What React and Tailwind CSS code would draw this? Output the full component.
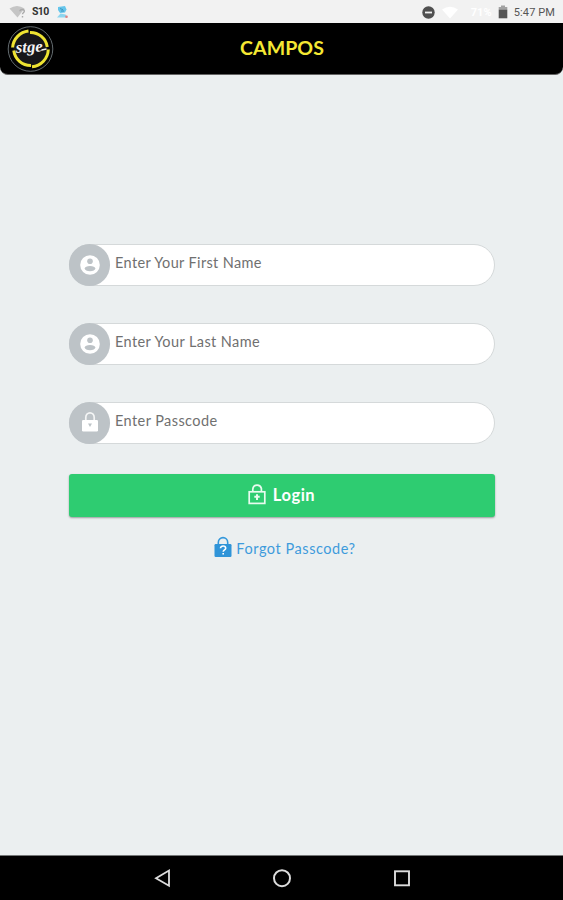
const fields = [
  { id: 'first', label: 'Enter Your First Name', icon: 'user', textClass: 'tracking-[0.36px]' },
  { id: 'last', label: 'Enter Your Last Name', icon: 'user', textClass: 'tracking-[0.4px]' },
  { id: 'passcode', label: 'Enter Passcode', icon: 'lock', textClass: 'tracking-[0.42px]' },
];

function UserIcon() {
  return (
    <svg viewBox="0 0 20 20" className="w-5 h-5 -mt-px">
      <circle cx="10" cy="10" r="9.8" fill="#fff" />
      <circle cx="10" cy="6.2" r="2.8" fill="#bdc3c7" />
      <ellipse cx="10" cy="13.6" rx="5.3" ry="2.7" fill="#bdc3c7" />
    </svg>
  );
}

function LockIcon() {
  return (
    <svg viewBox="0 0 20 22" className="w-5 h-[22px] -mt-0.5">
      <path d="M5.8 10V6.5a4.2 4.7 0 0 1 8.4 0V10" fill="none" stroke="#f4f5f5" strokeWidth="1.7" />
      <rect x="2" y="9" width="16" height="11.5" rx="1.2" fill="#fff" />
      <path d="M8 12.5h4l-2 3.5z" fill="#bdc3c7" />
    </svg>
  );
}

function UnlockIcon() {
  return (
    <svg viewBox="0 0 18 22" className="w-[18px] h-[22px] -mt-1" fill="none" stroke="#e8fbef" strokeWidth="1.7">
      <path d="M4.8 8.8V6a4.4 4.6 0 0 1 8.6-.5v3.3" />
      <rect x="1.2" y="8.8" width="15.6" height="11.6" />
      <path d="M9 11.2v5.8M6.3 13.8h5.4" strokeWidth="2" />
    </svg>
  );
}

function ForgotIcon() {
  return (
    <svg viewBox="0 0 18 22" className="w-[18px] h-[22px] -mt-0.5">
      <path d="M4.3 9V6.4a4.7 4.8 0 0 1 9.4 0V9" fill="none" stroke="#3498db" strokeWidth="1.6" />
      <rect x="0.5" y="8" width="17" height="13" rx="1.2" fill="#2f94d8" />
      <path d="M6.5 12.2c0-3 5.2-2.9 5.2 0 0 1.6-2.5 1.7-2.5 3.5M9.2 17v1.6" fill="none" stroke="#fff" strokeWidth="1.6" />
    </svg>
  );
}

function Logo() {
  return (
    <svg viewBox="0 0 48 48" className="w-12 h-12">
      <circle cx="24.5" cy="24" r="22.3" fill="#050505" stroke="#7c878c" strokeWidth="0.8" />
      <circle cx="24.5" cy="24" r="17.2" fill="#171719" />
      <g fill="none" stroke="#eee332" strokeWidth="3">
        <path d="M6.6 22.5A18 18 0 0 1 22.5 6" />
        <path d="M24 7.5A17 17 0 0 1 41.3 22" />
        <path d="M42.3 24.5A18 18 0 0 1 26 41.8" />
        <path d="M25 40.5A17 17 0 0 1 7.8 25.5" />
      </g>
      <text
        x="23.3" y="27" textAnchor="middle" textLength="27" lengthAdjust="spacingAndGlyphs"
        transform="rotate(-3 24 24)" fill="#f4f4f4"
        className="font-['Liberation_Serif',serif] italic font-bold text-[16px]"
      >
        stge
      </text>
      <path d="M35.5 25l5-1" stroke="#f4f4f4" strokeWidth="1.3" />
    </svg>
  );
}

function StatusBar() {
  return (
    <div className="h-[23px] shrink-0 flex items-center justify-between bg-[#f2f2f2] pl-[9px] pr-2 pt-px font-['Roboto',sans-serif]">
      <div className="flex items-center">
        <svg viewBox="0 0 17 14" className="w-[17px] h-[14px]">
          <path d="M0.5 3.5Q8 -1.5 15.5 3.5L8.5 12.5z" fill="#c5c5c5" />
          <path d="M11 6.2c0-2.3 4.3-2.2 4.3 0 0 1.5-1.8 1.5-1.8 3M13.5 11v1.5" fill="none" stroke="#aaa" strokeWidth="1.4" />
        </svg>
        <span className="ml-[6px] w-[17px] text-[10.5px] leading-none font-bold tracking-[-0.6px] text-[#333]">S10</span>
        <svg viewBox="0 0 13 14" className="ml-[7px] w-[13px] h-[14px]">
          <path d="M2 2l7-1 1.5 3.5L9 7.5 4 8 2 5z" fill="#65c5eb" />
          <path d="M1 12.5l3.5-4 5 1 2 3z" fill="#8dd5ef" />
          <path d="M4 3.5l3 1.2M5 6h3" stroke="#3489b4" strokeWidth="0.8" />
          <circle cx="10.5" cy="11.7" r="1.3" fill="#e28181" />
        </svg>
      </div>
      <div className="flex items-center">
        <svg viewBox="0 0 13 13" className="w-[13px] h-[13px]">
          <circle cx="6.5" cy="6.5" r="6.2" fill="#505050" />
          <path d="M3 6.5h7" stroke="#f2f2f2" strokeWidth="1.8" />
        </svg>
        <svg viewBox="0 0 16 13" className="ml-[7px] w-4 h-[13px]">
          <path d="M0 3.5Q8 -2 16 3.5L8 12.5z" fill="#fff" />
        </svg>
        <span className="ml-[13px] w-[21px] text-[11px] leading-none font-bold text-white">71%</span>
        <svg viewBox="0 0 10 14" className="ml-[6px] w-[10px] h-[14px]">
          <path d="M3 0.5h4v1.6h2.3V5H0.7V2.1H3z" fill="#a2a2a2" />
          <path d="M0.7 4.8h8.6v8.5H0.7z" fill="#555" />
        </svg>
        <span className="ml-[6px] text-[11px] leading-none text-[#555] tracking-[0.1px]">5:47 PM</span>
      </div>
    </div>
  );
}

function Field({ field }) {
  return (
    <label className="flex h-[42px] bg-white border border-[#d5d9da] rounded-full">
      <span className="-ml-px -my-px w-[41px] shrink-0 rounded-full bg-[#bdc3c7] flex items-center justify-center">
        {field.icon === 'user' ? <UserIcon /> : <LockIcon />}
      </span>
      <span className={`ml-[5px] mt-[8px] text-[14.5px] leading-5 whitespace-nowrap text-[#707070] ${field.textClass}`}>
        {field.label}
      </span>
    </label>
  );
}

export default function App() {
  return (
    <div className="w-full h-[900px] flex flex-col overflow-hidden bg-[#ebeff0] font-['Lato',sans-serif]">
      <StatusBar />

      <header className="h-[52px] shrink-0 grid grid-cols-[1fr_auto_1fr] items-center bg-black rounded-b-[8px] pl-[6px] pr-[5px] border-b border-[#646464]">
        <Logo />
        <h1 className="-mt-px text-[19.5px] leading-none font-bold tracking-[0.1px] text-[#f5e833]">CAMPOS</h1>
      </header>

      <main className="flex-1 pl-[69px] pr-[68px] pt-[169px]">
        <div className="flex flex-col gap-[37px]">
          {fields.map(field => (
            <Field key={field.id} field={field} />
          ))}
        </div>

        <button className="mt-[30px] pr-[1px] w-full h-[43px] flex items-center justify-center gap-[7px] rounded-[3px] bg-[#2ecc71] text-white shadow-[0_1px_2px_rgba(0,0,0,0.35)]">
          <UnlockIcon />
          <span className="-mt-px text-[16.5px] leading-none font-bold tracking-[0.5px]">Login</span>
        </button>

        <a className="mt-[20px] ml-[6px] flex items-center justify-center gap-[4px] text-[#3e9bdc]">
          <ForgotIcon />
          <span className="mt-[2px] text-[14.5px] leading-5 tracking-[0.55px]">Forgot Passcode?</span>
        </a>
      </main>

      <nav className="h-[45px] shrink-0 flex items-center justify-center gap-[100px] bg-black border-t border-[#747777]">
        <svg viewBox="0 0 20 20" className="w-5 h-5" fill="none" stroke="#dcdcdc" strokeWidth="1.8">
          <path d="M17 2.6v15.2L4 10.3z" />
        </svg>
        <svg viewBox="0 0 20 20" className="w-5 h-5" fill="none" stroke="#dcdcdc" strokeWidth="2">
          <circle cx="10" cy="10.2" r="8" />
        </svg>
        <svg viewBox="0 0 20 20" className="w-5 h-5" fill="none" stroke="#dcdcdc" strokeWidth="1.9">
          <rect x="3" y="3.3" width="14" height="14" />
        </svg>
      </nav>
    </div>
  );
}
